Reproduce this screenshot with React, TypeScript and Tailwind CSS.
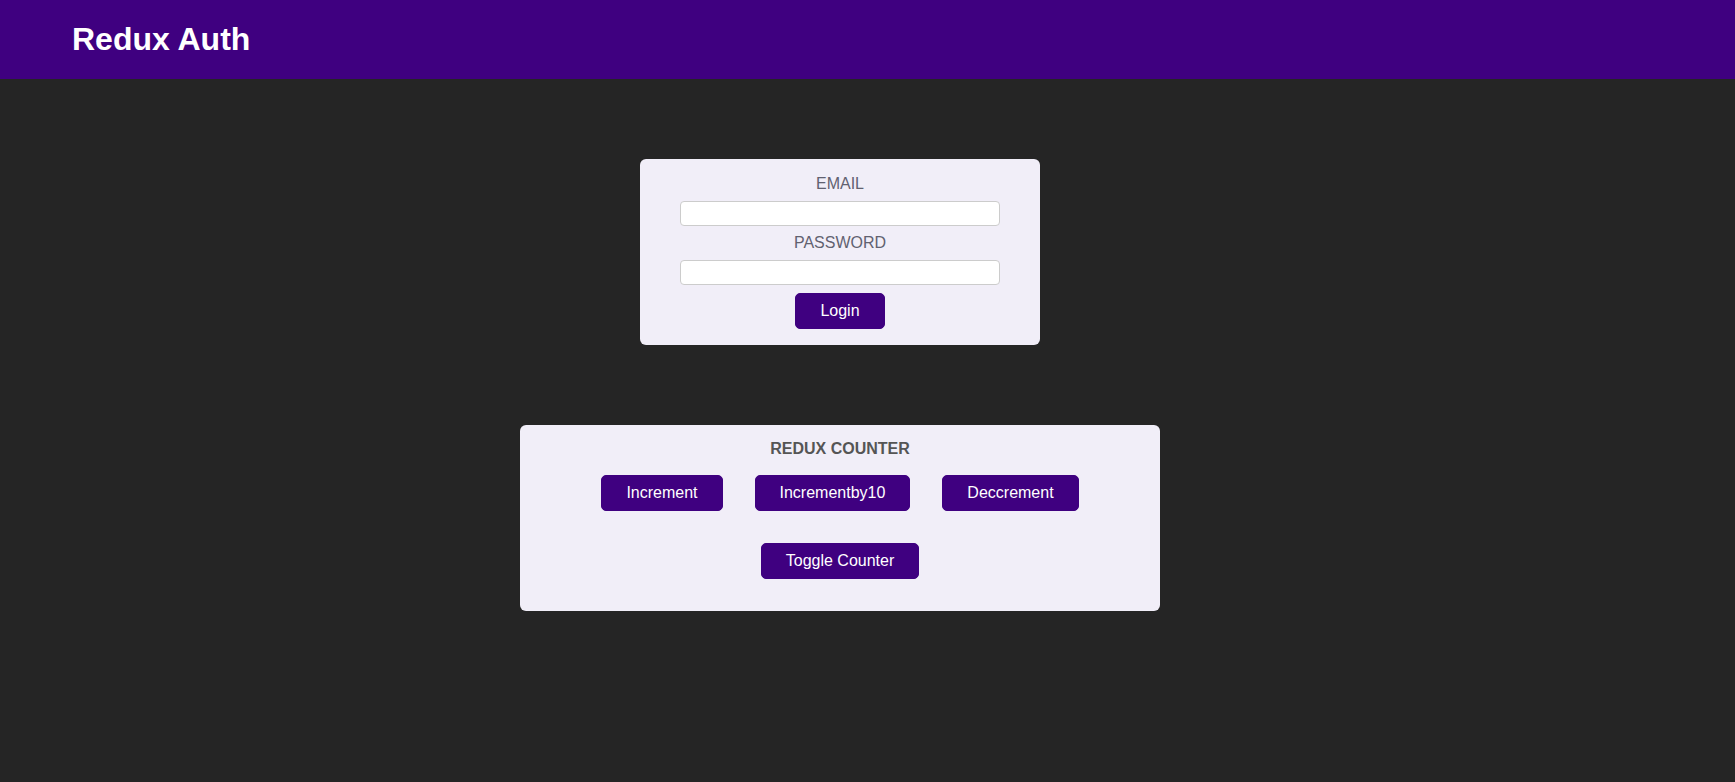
import React from "react";

const btn =
  "bg-[#3f0080] border border-[#3f0080] text-white text-[16px] leading-[18px] px-6 py-2 rounded-[5px] cursor-pointer";

export default function App() {
  return (
    <div className="min-h-[782px] bg-[#252525] font-['Liberation_Sans',Arial,sans-serif]">
      <header className="h-[79px] bg-[#3f0080] flex items-center pl-[72px]">
        <h1 className="text-white text-[32px] font-bold leading-[37px]">Redux Auth</h1>
      </header>

      <main className="flex flex-col items-center pr-[55px]">
        {/* Login */}
        <section className="mt-[80px] w-[400px] bg-[#f1eef8] rounded-[6px] pt-[16px] pb-[16px] flex flex-col items-center">
          <label className="text-[16px] leading-[18px] text-[#616170]">EMAIL</label>
          <input
            type="email"
            className="mt-[8px] w-[320px] h-[25px] bg-white border border-[#cccccc] rounded-[4px] px-1 outline-none"
          />
          <label className="mt-[8px] text-[16px] leading-[18px] text-[#616170]">PASSWORD</label>
          <input
            type="password"
            className="mt-[8px] w-[320px] h-[25px] bg-white border border-[#cccccc] rounded-[4px] px-1 outline-none"
          />
          <button type="button" className={`mt-[8px] ${btn}`}>
            Login
          </button>
        </section>

        {/* Counter */}
        <section className="mt-[80px] w-[640px] bg-[#f1eef8] rounded-[6px] pt-[15px] pb-[32px] flex flex-col items-center">
          <h2 className="text-[16px] leading-[18px] font-bold text-[#555555]">REDUX COUNTER</h2>
          <div className="mt-[17px] flex items-center gap-8">
            <button type="button" className={btn}>
              Increment
            </button>
            <button type="button" className={btn}>
              Incrementby10
            </button>
            <button type="button" className={btn}>
              Deccrement
            </button>
          </div>
          <button type="button" className={`mt-[32px] ${btn}`}>
            Toggle Counter
          </button>
        </section>
      </main>
    </div>
  );
}
